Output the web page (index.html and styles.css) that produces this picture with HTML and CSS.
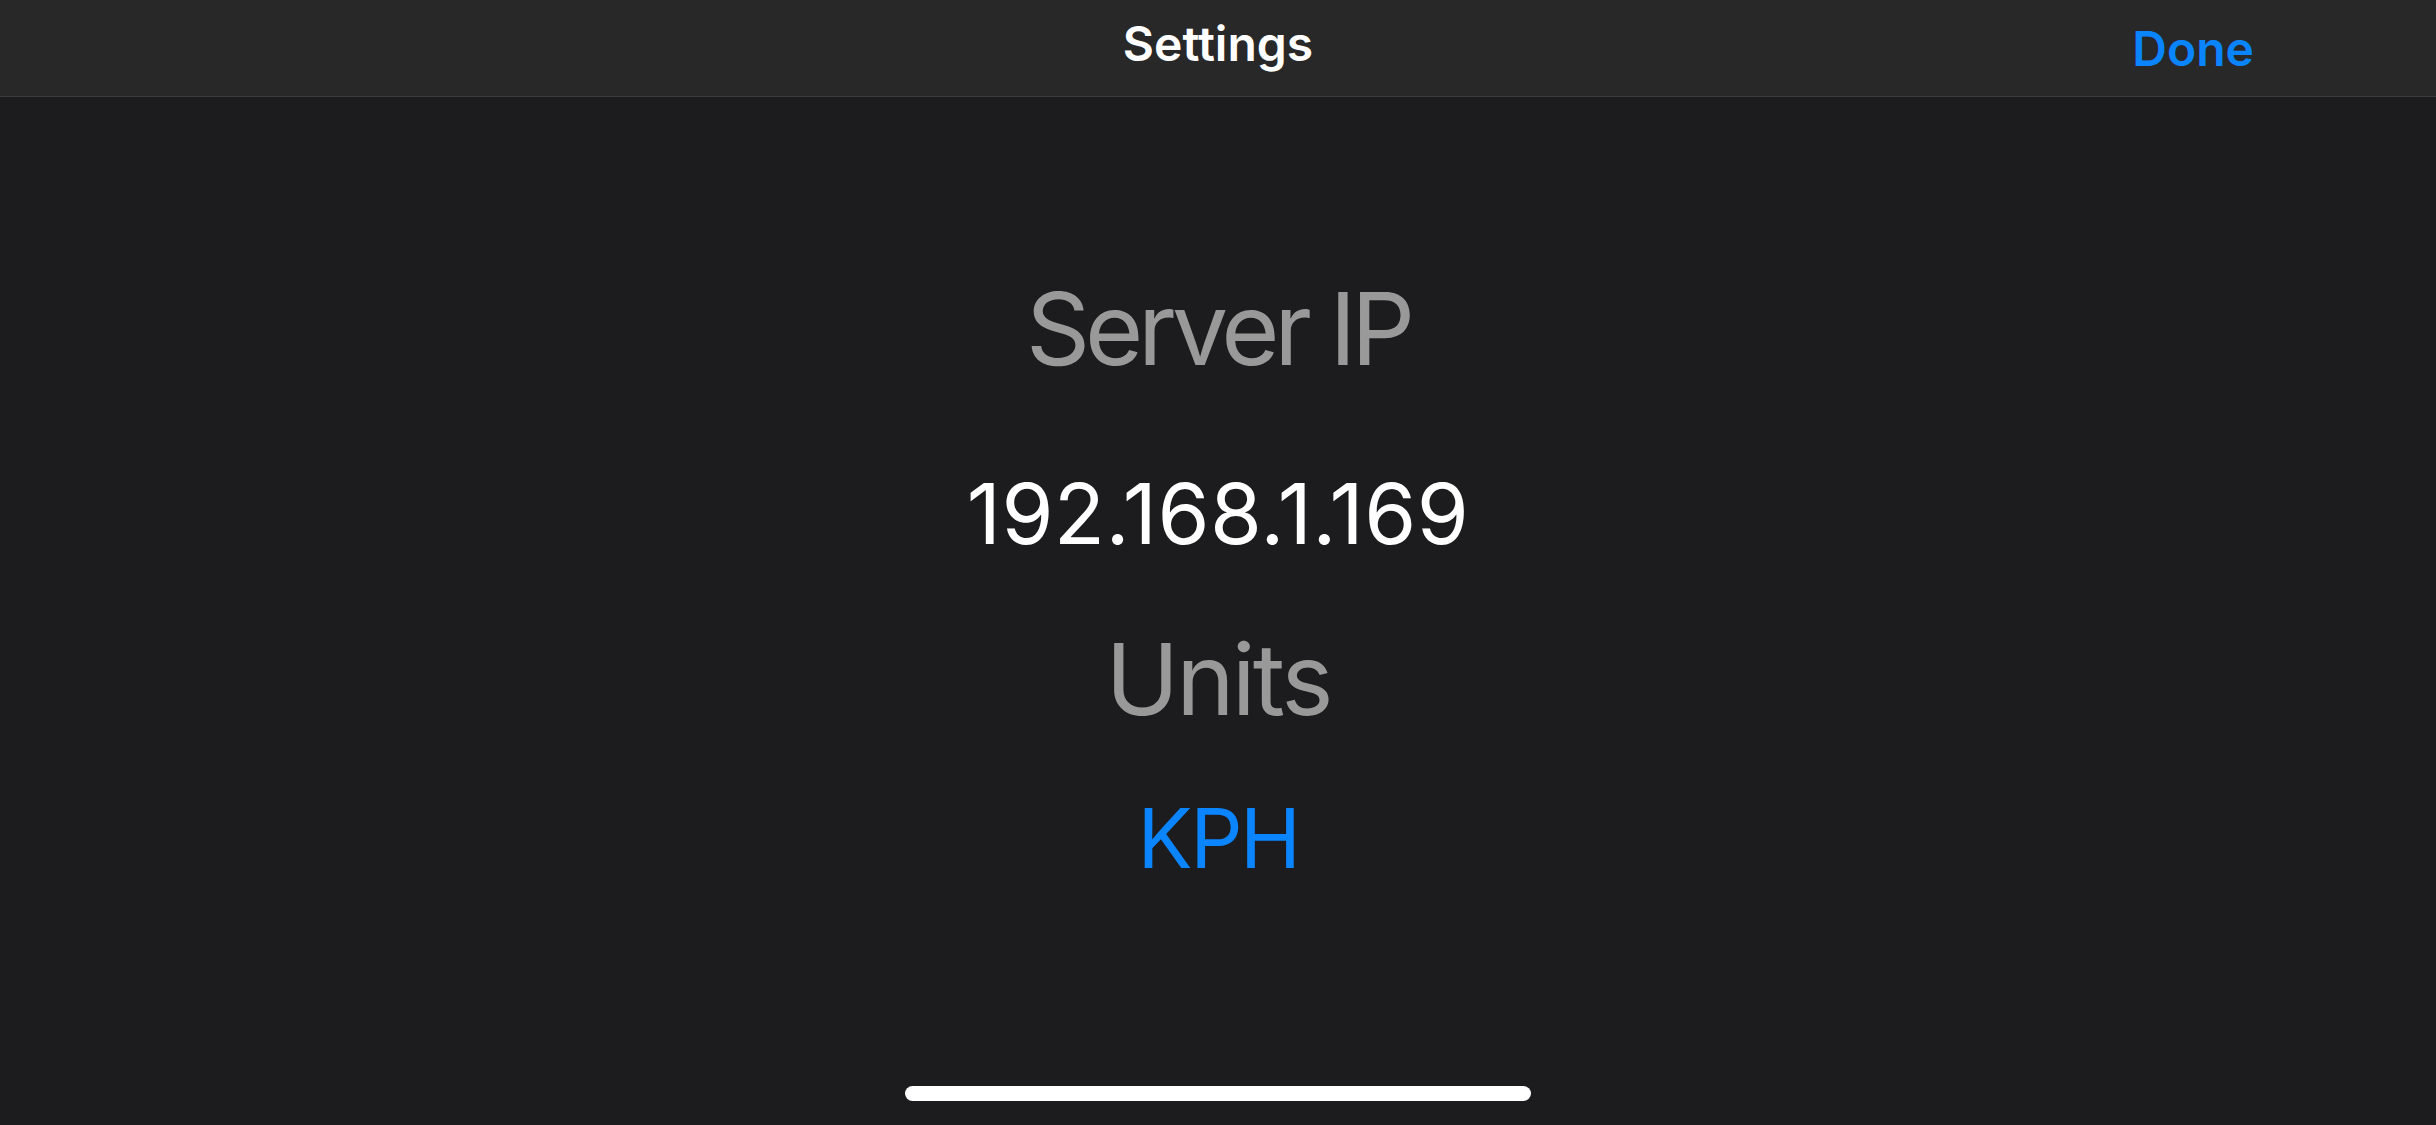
FILE: index.html
```html
<!DOCTYPE html>
<html>
<head lang="en">
    <meta charset="UTF-8">
    <title>Settings</title>
    <link rel="stylesheet" href="styles.css">
</head>
<body>
<div class="screen">
    <div class="navbar">
        <span></span>
        <h1 class="nav-title">Settings</h1>
        <a href="javascript:;" class="nav-done">Done</a>
    </div>

    <div class="content">
        <p class="label label-server">Server IP</p>
        <p class="value value-ip">192.168.1.169</p>
        <p class="label label-units">Units</p>
        <a href="javascript:;" class="value value-units">KPH</a>
    </div>

    <div class="home-indicator"></div>
</div>
</body>
</html>
```

FILE: styles.css
```css
@charset "UTF-8";
/*initial reset*/
body,h1,p{margin:0;padding:0}
a{text-decoration:none}

body{
    background: #1c1c1e;
    font-family: Inter, "Noto Sans", "Liberation Sans", sans-serif;
    color: #fff;
}
.screen{
    min-height: 100vh;
    display: flex;
    flex-direction: column;
}

/* top bar */
.navbar{
    height: 96px;
    background: #282828;
    border-bottom: 1px solid #3c3c3c;
    display: grid;
    grid-template-columns: 1fr auto 1fr;
    align-items: start;
}
.nav-title{
    font-size: 48px;
    line-height: 1;
    font-weight: 600;
    padding-top: 20px;
    color: #fff;
}
.nav-done{
    justify-self: end;
    font-size: 48px;
    line-height: 1;
    font-weight: 600;
    padding-top: 25px;
    padding-right: 182px;
    color: #0a84ff;
}

/* settings list */
.content{
    flex: 1;
    display: flex;
    flex-direction: column;
    align-items: center;
    line-height: 1;
}
.label{
    color: #999999;
}
.label-server{
    font-size: 100px;
    letter-spacing: -5.2px;
    margin-top: 182px;
}
.value-ip{
    font-size: 84px;
    letter-spacing: 0.4px;
    margin-top: 93px;
}
.label-units{
    font-size: 99px;
    letter-spacing: -3px;
    margin-top: 74px;
}
.value-units{
    font-size: 82px;
    letter-spacing: -2.5px;
    margin-top: 69px;
    color: #0a84ff;
}

.home-indicator{
    width: 626px;
    height: 15px;
    border-radius: 8px;
    background: #fff;
    margin: 0 auto 24px;
}
```
